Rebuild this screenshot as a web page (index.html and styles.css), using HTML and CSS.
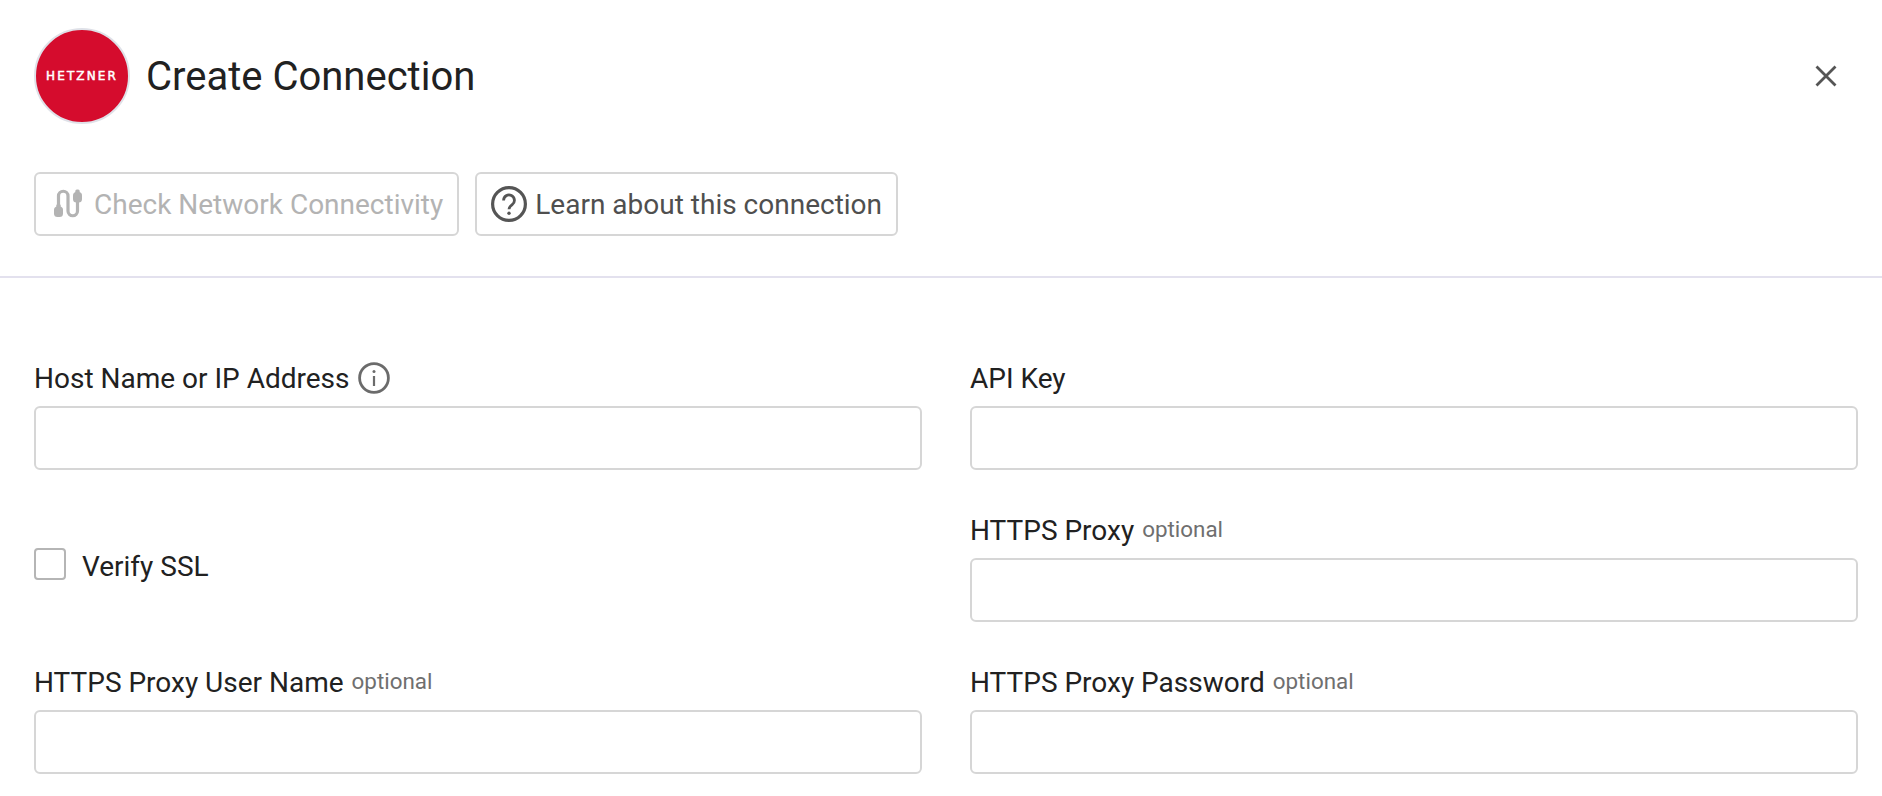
FILE: index.html
```html
<!DOCTYPE html>
<html lang="en">
<head>
<meta charset="utf-8">
<title>Create Connection</title>
<link rel="stylesheet" href="styles.css">
</head>
<body>
<div class="dialog">
  <header class="head">
    <div class="title-wrap">
      <div class="logo"><span class="logo-text">HETZNER</span></div>
      <h1 class="title">Create Connection</h1>
    </div>
    <button class="close" aria-label="Close">
      <svg class="close-icon" viewBox="0 0 22 22"><path d="M1.5 1.5 20.5 20.5M20.5 1.5 1.5 20.5"/></svg>
    </button>
  </header>
  <div class="actions">
    <button class="btn btn-disabled">
      <svg class="btn-icon" viewBox="0 0 36 36"><path class="cable" d="M8.5 21V10a4.75 4.75 0 0 1 9.5 0V25a4.75 4.75 0 0 0 9.5 0V16"/><rect class="plug" x="4" y="20.5" width="9" height="10.5" rx="3.5"/><rect class="plug" x="23" y="6" width="9" height="10.5" rx="3.5"/><rect class="plug" x="25.3" y="3.5" width="4.4" height="5" rx="1.5"/><rect class="plug" x="6.3" y="18" width="4.4" height="5" rx="1.5"/></svg>
      <span>Check Network Connectivity</span>
    </button>
    <button class="btn">
      <svg class="btn-icon" viewBox="0 0 36 36"><circle class="ring" cx="18" cy="18" r="16.4"/><path class="q" d="M12.6 14.4a5.4 5.4 0 1 1 8.6 4.3c-2 1.5-3.2 2.4-3.2 4.6"/><circle class="dot" cx="18" cy="27.2" r="1.7"/></svg>
      <span>Learn about this connection</span>
    </button>
  </div>
  <hr class="divider">
  <form class="form">
    <div class="field">
      <div class="label"><span>Host Name or IP Address</span>
        <svg class="info" viewBox="0 0 32 32"><circle class="ring" cx="16" cy="16" r="14.4"/><path class="stem" d="M16 14v10"/><circle class="dot" cx="16" cy="9.6" r="1.5"/></svg>
      </div>
      <input class="input" type="text">
    </div>
    <div class="field">
      <div class="label"><span>API Key</span></div>
      <input class="input" type="text">
    </div>
    <label class="check-row">
      <span class="checkbox"></span>
      <span class="check-label">Verify SSL</span>
    </label>
    <div class="field">
      <div class="label"><span>HTTPS Proxy</span><span class="optional">optional</span></div>
      <input class="input" type="text">
    </div>
    <div class="field">
      <div class="label"><span>HTTPS Proxy User Name</span><span class="optional">optional</span></div>
      <input class="input" type="text">
    </div>
    <div class="field">
      <div class="label"><span>HTTPS Proxy Password</span><span class="optional">optional</span></div>
      <input class="input" type="text">
    </div>
  </form>
</div>
</body>
</html>
```
FILE: styles.css
```css
* { box-sizing: border-box; }
html, body { margin: 0; height: 100%; overflow: hidden; background: #fff; }
body { font-family: Roboto, "Noto Sans", sans-serif; color: #212121; }
.dialog { width: 100%; }
.head { display: flex; align-items: center; justify-content: space-between; padding: 28px 43px 0 34px; }
.title-wrap { display: flex; align-items: center; gap: 16px; }
.logo { width: 96px; height: 96px; border-radius: 50%; background: #d50c2d; border: 2px solid #dfe1e8; display: flex; align-items: center; justify-content: center; }
.logo-text { color: #fff; font-family: "DejaVu Sans", sans-serif; font-weight: 400; font-size: 12px; letter-spacing: 2.1px; line-height: 1; -webkit-text-stroke: 0.5px #fff; }
.title { margin: 0; padding-top: 2px; font-size: 40px; font-weight: 400; line-height: 48px; color: #212121; }
.close { width: 24px; height: 24px; margin-top: 2px; padding: 0; border: 0; background: none; display: flex; }
.close-icon { width: 22px; height: 22px; fill: none; stroke: #555; stroke-width: 2.8; }
.actions { display: flex; gap: 16px; padding: 48px 0 0 34px; }
.btn { height: 64px; padding: 0 14px; display: flex; align-items: center; gap: 8px; background: #fff; border: 2px solid #d6d6d6; border-radius: 6px; font-family: inherit; font-size: 28px; color: #4f4f4f; }
.btn-disabled { color: #b3b3b3; }
.btn-icon { width: 36px; height: 36px; flex: none; }
.cable { fill: none; stroke: #b3b3b3; stroke-width: 3.2; }
.plug { fill: #b3b3b3; }
.ring { fill: none; stroke: #555; stroke-width: 3.2; }
.q { fill: none; stroke: #555; stroke-width: 2.8; }
.dot { fill: #555; }
.divider { margin: 40px 0 0; border: 0; border-top: 2px solid #e3e1ee; }
.form { display: grid; grid-template-columns: 888px 888px; column-gap: 48px; row-gap: 40px; padding: 80px 0 0 34px; }
.field { display: flex; flex-direction: column; gap: 8px; }
.label { display: flex; align-items: center; gap: 8px; height: 40px; font-size: 28px; color: #212121; white-space: nowrap; }
.info { width: 32px; height: 32px; }
.info .ring { stroke: #6b6b6b; stroke-width: 2.8; }
.stem { stroke: #6b6b6b; stroke-width: 2.2; }
.info .dot { fill: #6b6b6b; }
.optional { margin-bottom: 2px; font-size: 22.4px; color: #6f6f6f; }
.input { height: 64px; width: 100%; border: 2px solid #d6d6d6; border-radius: 6px; background: #fff; }
.check-row { display: flex; align-items: center; gap: 16px; }
.checkbox { width: 32px; height: 32px; margin-bottom: 4px; border: 2px solid #b5b5b5; border-radius: 4px; background: #fff; }
.check-label { font-size: 28px; color: #212121; }
```
